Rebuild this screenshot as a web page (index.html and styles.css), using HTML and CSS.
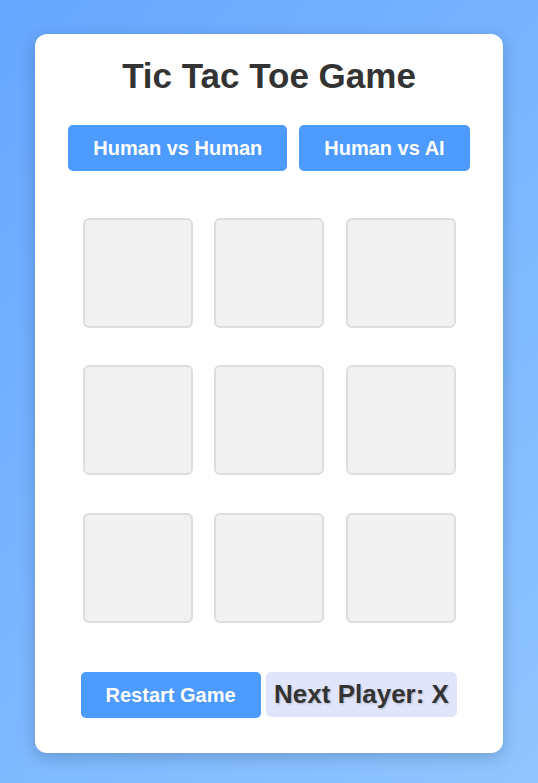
FILE: index.html
```html
<!DOCTYPE html>
<html lang="en">
<head>
<meta charset="utf-8">
<title>Tic Tac Toe Game</title>
<link rel="stylesheet" href="styles.css">
</head>
<body>
<div class="card">
  <h1 class="title">Tic Tac Toe Game</h1>
  <div class="modes">
    <button class="btn">Human vs Human</button>
    <button class="btn">Human vs AI</button>
  </div>
  <div class="board">
    <div class="cell"></div><div class="cell"></div><div class="cell"></div>
    <div class="cell"></div><div class="cell"></div><div class="cell"></div>
    <div class="cell"></div><div class="cell"></div><div class="cell"></div>
  </div>
  <div class="footer">
    <button class="btn">Restart Game</button>
    <div class="status">Next Player: X</div>
  </div>
</div>
</body>
</html>
```
FILE: styles.css
```css
html, body {
  margin: 0;
  height: 100%;
}
body {
  font-family: "Liberation Sans", Arial, sans-serif;
  background: linear-gradient(135deg, #66a6ff 0%, #8fc6ff 100%);
  display: flex;
  justify-content: center;
  align-items: center;
}
.card {
  background: #fff;
  width: 468px;
  margin-top: 3px;
  box-sizing: border-box;
  border-radius: 12px;
  padding: 21px 0 35px;
  box-shadow: 0 4px 16px rgba(0, 0, 0, 0.2);
  display: flex;
  flex-direction: column;
  align-items: center;
}
.title {
  margin: 0;
  font-size: 35px;
  line-height: 42px;
  color: #333;
  font-weight: bold;
}
.modes {
  margin-top: 28px;
  display: flex;
  gap: 12px;
}
.btn {
  font-family: "Liberation Sans", Arial, sans-serif;
  font-size: 20px;
  font-weight: bold;
  line-height: 22px;
  color: #fff;
  background: #4d9bff;
  border: none;
  border-radius: 5px;
  padding: 12px 25px;
}
.board {
  margin-top: 47px;
  display: grid;
  grid-template-columns: repeat(3, 110px);
  grid-auto-rows: 110px;
  column-gap: 21.5px;
  row-gap: 37.5px;
}
.cell {
  background: #f1f1f1;
  border: 2px solid #dddddd;
  border-radius: 6px;
}
.footer {
  margin-top: 49px;
  display: flex;
  align-items: center;
  gap: 5px;
}
.status {
  background: #e0e5fb;
  border-radius: 5px;
  padding: 8px 8.5px;
  font-size: 26px;
  line-height: 29px;
  font-weight: bold;
  color: #333;
  text-shadow: 1px 1px 2px rgba(0, 0, 0, 0.2);
}
```
